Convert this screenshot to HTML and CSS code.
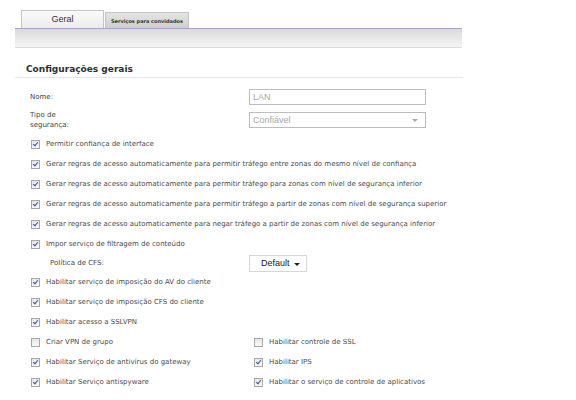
FILE: index.html
```html
<!DOCTYPE html>
<html lang="pt">
<head>
    <meta charset="UTF-8">
    <title>Geral</title>
    <link rel="stylesheet" href="styles.css">
</head>
<body>
    <div class="page">
        <div class="tabs">
            <div class="tab active">Geral</div>
            <div class="tab">Serviços para convidados</div>
        </div>
        <div class="tab-bar"></div>

        <h2 class="section-title">Configurações gerais</h2>

        <div class="field">
            <label class="field-label">Nome:</label>
            <div class="text-box">LAN</div>
        </div>
        <div class="field field-tall">
            <label class="field-label">Tipo de<br>segurança:</label>
            <div class="text-box select-box">Confiável<span class="caret"></span></div>
        </div>

        <div class="check-row"><span class="box on"></span>Permitir confiança de interface</div>
        <div class="check-row"><span class="box on"></span>Gerar regras de acesso automaticamente para permitir tráfego entre zonas do mesmo nível de confiança</div>
        <div class="check-row"><span class="box on"></span>Gerar regras de acesso automaticamente para permitir tráfego para zonas com nível de segurança inferior</div>
        <div class="check-row"><span class="box on"></span>Gerar regras de acesso automaticamente para permitir tráfego a partir de zonas com nível de segurança superior</div>
        <div class="check-row"><span class="box on"></span>Gerar regras de acesso automaticamente para negar tráfego a partir de zonas com nível de segurança inferior</div>
        <div class="check-row"><span class="box on"></span>Impor serviço de filtragem de conteúdo</div>

        <div class="field field-cfs">
            <label class="field-label sub">Política de CFS:</label>
            <div class="menu-button">Default<span class="caret dark"></span></div>
        </div>

        <div class="check-row"><span class="box on"></span>Habilitar serviço de imposição do AV do cliente</div>
        <div class="check-row"><span class="box on"></span>Habilitar serviço de imposição CFS do cliente</div>
        <div class="check-row"><span class="box on"></span>Habilitar acesso a SSLVPN</div>

        <div class="pair">
            <div class="check-row"><span class="box"></span>Criar VPN de grupo</div>
            <div class="check-row"><span class="box"></span>Habilitar controle de SSL</div>
        </div>
        <div class="pair">
            <div class="check-row"><span class="box on"></span>Habilitar Serviço de antivírus do gateway</div>
            <div class="check-row"><span class="box on"></span>Habilitar IPS</div>
        </div>
        <div class="pair">
            <div class="check-row"><span class="box on"></span>Habilitar Serviço antispyware</div>
            <div class="check-row"><span class="box on"></span>Habilitar o serviço de controle de aplicativos</div>
        </div>
    </div>
</body>
</html>
```

FILE: styles.css
```css
body {
    margin: 0;
    background-color: #fff;
    font-family: "DejaVu Sans", sans-serif;
    color: #4a4a4a;
}

.page {
    width: 447px;
    margin-left: 15px;
    padding-top: 10px;
}

.tabs {
    display: flex;
    align-items: flex-end;
    padding-left: 6px;
    height: 18px;
}

.tab {
    box-sizing: border-box;
    height: 16px;
    width: 84px;
    border: 1px solid #c4c4c4;
    border-bottom: none;
    background: linear-gradient(#e4e4e4, #cfcfcf);
    font-size: 5px;
    font-weight: bold;
    color: #333;
    display: flex;
    align-items: center;
    justify-content: center;
    margin-left: 1px;
}

.tab.active {
    height: 18px;
    width: 83px;
    margin-left: 0;
    background: linear-gradient(#fafafa, #ececec);
    font-size: 9px;
    font-weight: normal;
    font-family: "Liberation Sans", sans-serif;
    color: #333;
    padding-bottom: 2px;
}

.tab-bar {
    height: 18px;
    border-top: 1px solid #a8a6c4;
    border-bottom: 1px solid #dcdcdc;
    background: linear-gradient(#dadada, #f5f5f5);
}

.section-title {
    margin: 16px 0 0;
    padding: 0 0 3px 11px;
    font-size: 9px;
    font-weight: bold;
    color: #2e2e2e;
    border-bottom: 1px solid #e6e6e6;
    width: 437px;
}

.field {
    display: flex;
    align-items: center;
    padding-left: 15px;
    margin-top: 11px;
}

.field-tall {
    margin-top: 5px;
}

.field-label {
    width: 219px;
    font-size: 7px;
    line-height: 10px;
    color: #444;
}

.text-box {
    box-sizing: border-box;
    width: 177px;
    height: 16px;
    border: 1px solid #bcbcbc;
    padding-left: 3px;
    font-family: "Liberation Sans", sans-serif;
    font-size: 9px;
    line-height: 14px;
    color: #a8a8a8;
    position: relative;
}

.caret {
    position: absolute;
    right: 7px;
    top: 6px;
    border-left: 3px solid transparent;
    border-right: 3px solid transparent;
    border-top: 3px solid #aaa;
}

.caret.dark {
    right: 6px;
    top: 7px;
    border-top-color: #222;
}

.check-row {
    display: flex;
    align-items: center;
    height: 20px;
    padding-left: 16px;
    font-size: 7px;
    color: #4a4a4a;
    white-space: nowrap;
}

.field-tall + .check-row {
    margin-top: 4px;
}

.box {
    box-sizing: border-box;
    width: 9px;
    height: 9px;
    border: 1px solid #a7a7a7;
    background: linear-gradient(#e6e6e6, #fafafa);
    margin-right: 6px;
    position: relative;
    flex: none;
}

.box.on::after {
    content: "";
    position: absolute;
    left: 2px;
    top: 0px;
    width: 2px;
    height: 4px;
    border-right: 1.5px solid #3a4fa0;
    border-bottom: 1.5px solid #3a4fa0;
    transform: rotate(40deg);
}

.field-cfs {
    margin-top: 0;
    padding-left: 35px;
    height: 18px;
}

.field-cfs .field-label {
    width: 199px;
}

.menu-button {
    box-sizing: border-box;
    width: 58px;
    height: 17px;
    border: 1px solid #d6d6d6;
    padding-left: 11px;
    font-family: "Liberation Sans", sans-serif;
    font-size: 9px;
    line-height: 15px;
    color: #222;
    position: relative;
}

.pair {
    display: grid;
    grid-template-columns: 223px 1fr;
}
```
